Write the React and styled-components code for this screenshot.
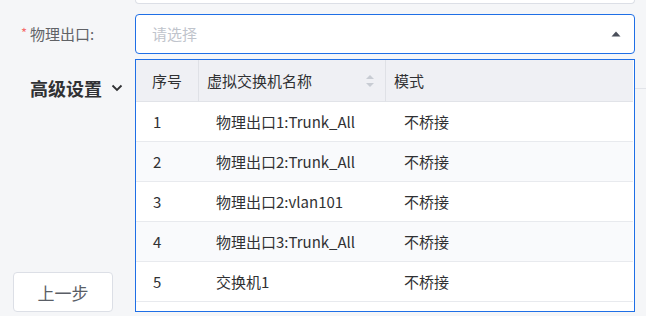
import React from "react";
import styled, { createGlobalStyle } from "styled-components";

const Global = createGlobalStyle`
  html, body { margin: 0; padding: 0; background: #f5f6f8; }
  body { font-family: "Noto Sans CJK SC", "Noto Sans", sans-serif; }
  * { box-sizing: border-box; }
`;

const Page = styled.div`
  position: relative;
  width: 646px;
  height: 316px;
  overflow: hidden;
  padding-right: 11px;
`;

const PrevField = styled.div`
  margin-left: 135px;
  height: 4px;
  background: #fff;
  border: 1px solid #dcdfe6;
  border-top: none;
  border-radius: 0 0 4px 4px;
`;

const FormRow = styled.div`
  margin-top: 10px;
  height: 40px;
  display: grid;
  grid-template-columns: 135px 1fr;
  align-items: center;
`;

const Label = styled.label`
  padding-left: 21px;
  font-size: 15px;
  line-height: 20px;
  color: #606266;
  display: flex;
  align-items: center;
`;

const Star = styled.span`
  color: #f56c6c;
  font-size: 13px;
  margin-right: 3px;
  position: relative;
  top: -1px;
`;

const Select = styled.div`
  height: 40px;
  border: 1px solid #1f6fe6;
  border-radius: 4px;
  background: #fff;
  display: flex;
  align-items: center;
  justify-content: space-between;
  padding: 0 13px 0 16px;
`;

const Placeholder = styled.span`
  font-size: 15px;
  line-height: 20px;
  color: #c0c4cc;
`;

const SectionHeader = styled.div`
  margin-top: 19px;
  height: 30px;
  display: grid;
  grid-template-columns: 135px 1fr;
  align-items: center;
`;

const SectionTitle = styled.div`
  padding-left: 30px;
  display: flex;
  align-items: center;
  gap: 9px;
  font-size: 18px;
  line-height: 26px;
  font-weight: 700;
  color: #303133;
`;

const Rule = styled.div`
  height: 1px;
  background: #e2e4e9;
  margin-right: -11px;
`;

const Footer = styled.div`
  margin-top: 169px;
  padding-left: 13px;
`;

const Button = styled.button`
  width: 100px;
  height: 40px;
  background: #fff;
  border: 1px solid #dcdfe6;
  border-radius: 4px;
  font-family: inherit;
  font-size: 17px;
  color: #5a5e66;
  padding: 0;
`;

const Dropdown = styled.div`
  position: absolute;
  left: 135px;
  top: 59px;
  width: 500px;
  height: 253px;
  background: #fff;
  border: 1px solid #1f6fe6;
  padding-right: 1px;
  overflow: hidden;
`;

const Table = styled.div`
  display: grid;
  grid-template-columns: 63px 187px 1fr;
  font-size: 15px;
  color: #303133;
`;

const HeadCell = styled.div`
  height: 42px;
  background: #eff0f4;
  border-bottom: 1px solid #e1e3e8;
  border-right: ${(p) => (p.$last ? "none" : "1px solid #dfe1e6")};
  display: flex;
  align-items: center;
  justify-content: space-between;
  padding-left: ${(p) => p.$pl}px;
  padding-right: 10px;
`;

const Cell = styled.div`
  height: 40px;
  background: ${(p) => (p.$stripe ? "#f9fafc" : "#fff")};
  border-bottom: 1px solid #e8eaee;
  display: flex;
  align-items: center;
  padding-left: ${(p) => p.$pl}px;
  white-space: nowrap;
`;

const SortIcon = () => (
  <svg width="10" height="14" viewBox="0 0 10 14">
    <path d="M1 5 L5 1 L9 5 Z" fill="#c8ccd3" />
    <path d="M1 9 L5 13 L9 9 Z" fill="#c8ccd3" />
  </svg>
);

const rows = [
  ["1", "物理出口1:Trunk_All", "不桥接"],
  ["2", "物理出口2:Trunk_All", "不桥接"],
  ["3", "物理出口2:vlan101", "不桥接"],
  ["4", "物理出口3:Trunk_All", "不桥接"],
  ["5", "交换机1", "不桥接"],
];

export default function App() {
  return (
    <>
      <Global />
      <Page>
        <PrevField />
        <FormRow>
          <Label>
            <Star>*</Star>物理出口:
          </Label>
          <Select>
            <Placeholder>请选择</Placeholder>
            <svg width="10" height="6" viewBox="0 0 10 6">
              <path d="M0.5 5.5 L5 0.5 L9.5 5.5 Z" fill="#4a4f5a" />
            </svg>
          </Select>
        </FormRow>
        <SectionHeader>
          <SectionTitle>
            高级设置
            <svg width="12" height="8" viewBox="0 0 12 8">
              <path d="M1.5 1.5 L6 6 L10.5 1.5" fill="none" stroke="#303133" strokeWidth="1.8" />
            </svg>
          </SectionTitle>
          <Rule />
        </SectionHeader>
        <Footer>
          <Button>上一步</Button>
        </Footer>
        <Dropdown>
          <Table>
            <HeadCell $pl={16}>序号</HeadCell>
            <HeadCell $pl={8}>
              虚拟交换机名称
              <SortIcon />
            </HeadCell>
            <HeadCell $pl={8} $last>模式</HeadCell>
            {rows.map((r, i) => (
              <React.Fragment key={r[0]}>
                <Cell $pl={17} $stripe={i % 2 === 1}>{r[0]}</Cell>
                <Cell $pl={17} $stripe={i % 2 === 1}>{r[1]}</Cell>
                <Cell $pl={18} $stripe={i % 2 === 1}>{r[2]}</Cell>
              </React.Fragment>
            ))}
          </Table>
        </Dropdown>
      </Page>
    </>
  );
}
